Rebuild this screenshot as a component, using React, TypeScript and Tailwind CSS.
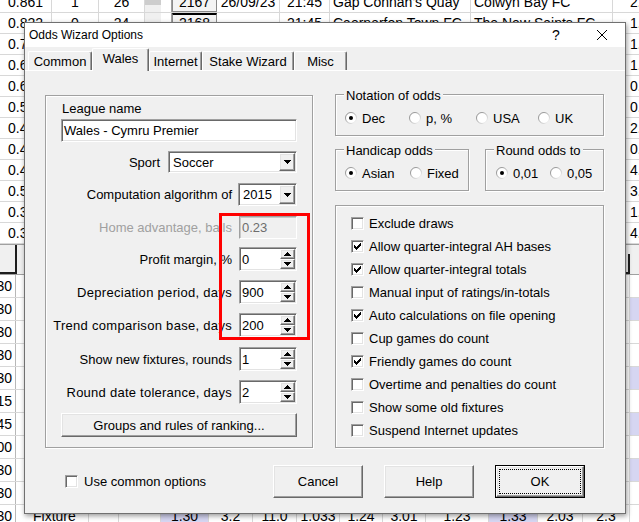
import type { ReactNode } from "react";

// classic 3D borders
const SUNKEN =
  "border border-t-[#a0a0a0] border-l-[#a0a0a0] border-r-white border-b-white shadow-[inset_1px_1px_0_#696969,inset_-1px_-1px_0_#e3e3e3]";
const RAISED =
  "border border-t-white border-l-white border-r-[#696969] border-b-[#696969] bg-[#f0f0f0] shadow-[inset_-1px_-1px_0_#a0a0a0,inset_1px_1px_0_#e3e3e3]";

type TopRowData = {
  rating: string;
  won?: string;
  games?: string;
  id?: string;
  date?: string;
  time?: string;
  home?: string;
  away?: string;
  odds: string;
};

const TOP_ROWS: TopRowData[] = [
  { rating: "0.861", won: "1", games: "26", id: "2167", date: "26/09/23", time: "21:45", home: "Gap Connah's Quay", away: "Colwyn Bay FC", odds: "2.05" },
  { rating: "0.822", won: "0", games: "24", id: "2168", date: "", time: "21:45", home: "Caernarfon Town FC", away: "The New Saints FC", odds: "1.62" },
  { rating: "0.745", odds: "1.48" },
  { rating: "0.634", odds: "1.91" },
  { rating: "0.612", odds: "0.77" },
  { rating: "0.538", odds: "0.64" },
  { rating: "0.471", odds: "2.10" },
  { rating: "0.455", odds: "0.85" },
  { rating: "0.418", odds: "4.20" },
  { rating: "0.502", odds: "3.35" },
  { rating: "0.367", odds: "1.18" },
  { rating: "0.341", odds: "4.02" },
];

const LOWER_TIMES = ["19:30", "19:30", "19:30", "19:30", "19:30", "20:15", "19:45", "20:00", "19:30", "19:30", "19:30"];
const LOWER_WIDTHS = ["w-[73px]", "w-[30px]", "w-[42px]", "w-[48px]", "w-[44px]", "w-[44px]", "w-[43px]", "w-[43px]", "w-[43px]", "w-[63px]", "w-[49px]", "w-[45px]", "w-[47px]"];
const LAST_ROW = ["Fixture", "", "", "1.30", "3.2", "11.0", "1.033", "1.24", "3.01", "1.23", "1.33", "2.03", "2.3"];
const LAVENDER_ROWS = [1, 4, 6, 8];

const OPTIONS: [string, boolean][] = [
  ["Exclude draws", false],
  ["Allow quarter-integral AH bases", true],
  ["Allow quarter-integral totals", true],
  ["Manual input of ratings/in-totals", false],
  ["Auto calculations on file opening", true],
  ["Cup games do count", false],
  ["Friendly games do count", true],
  ["Overtime and penalties do count", false],
  ["Show some old fixtures", false],
  ["Suspend Internet updates", false],
];

function SheetTopRow({ row, index }: { row: TopRowData; index: number }) {
  return (
    <div className="flex h-[21px] border-b border-[#d8d8d8]">
      <div className="flex w-[52px] shrink-0 items-center border-r border-[#d8d8d8] pl-[8px]">{row.rating}</div>
      <div className="flex w-[47px] shrink-0 items-center justify-center border-r border-[#d8d8d8]">{row.won}</div>
      <div className="flex w-[46px] shrink-0 items-center justify-center border-r border-[#d8d8d8]">{row.games}</div>
      <div className="w-[16px] shrink-0 bg-[#f0f0f0]">{index === 0 && <div className="h-[13px] bg-[#cdcdcd]" />}</div>
      <div className="w-[11px] shrink-0 border-r border-[#a0a0a0]" />
      <div
        className={`flex w-[45px] shrink-0 items-center justify-center ${
          row.id ? "border border-[#8a8a8a] bg-[#f4f4f4]" : "border-r border-[#d8d8d8]"
        } ${index === 1 ? "border-t-2 border-t-black" : ""}`}
      >
        {row.id}
      </div>
      <div className="flex w-[63px] shrink-0 items-center justify-center border-r border-[#d8d8d8]">{row.date}</div>
      <div className="flex w-[50px] shrink-0 items-center justify-center border-r border-[#d8d8d8]">{row.time}</div>
      <div className="flex w-[141px] shrink-0 items-center overflow-hidden whitespace-nowrap border-r border-[#d8d8d8] pl-[3px]">{row.home}</div>
      <div className="flex w-[142px] shrink-0 items-center overflow-hidden whitespace-nowrap border-r border-[#d8d8d8] pl-[3px]">{row.away}</div>
      <div className="flex w-[62px] shrink-0 items-center justify-center border-r border-[#d8d8d8]">{row.odds}</div>
      <div className="flex-1" />
    </div>
  );
}

function SheetLowerRow({ index }: { index: number }) {
  const cells = index === LOWER_TIMES.length - 1 ? LAST_ROW : [];
  return (
    <div className="flex h-[23px] border-b border-[#d8d8d8]">
      <div className="flex w-[16px] shrink-0 items-center justify-end overflow-hidden border-r border-[#b8b8b8] pr-[3px]">
        <span className="whitespace-nowrap">{LOWER_TIMES[index]}</span>
      </div>
      {LOWER_WIDTHS.map((w, c) => (
        <div
          key={c}
          className={`${w} flex shrink-0 items-center border-r border-[#d8d8d8] ${c === 0 ? "pl-[17px]" : "justify-center"} ${
            c === 3 || c === 10 ? "bg-[#d6d6f2]" : ""
          }`}
        >
          {cells[c]}
        </div>
      ))}
      <div className={`flex-1 ${LAVENDER_ROWS.includes(index) ? "bg-[#d6d6f2]" : ""}`} />
    </div>
  );
}

function Spreadsheet() {
  return (
    <div className="-mt-[8px]">
      {TOP_ROWS.map((row, i) => (
        <SheetTopRow key={i} row={row} index={i} />
      ))}
      <div className="flex h-[31px] border-y border-[#a0a0a0] bg-[#f0f0f0]">
        <div className="w-[17px] shrink-0 border-b-2 border-r-2 border-[#1e1e1e]" />
        <div className="w-[596px] shrink-0" />
        <div className="mt-[9px] w-[17px] shrink-0 border-b-2 border-r-2 border-[#1e1e1e]" />
        <div className="flex-1" />
      </div>
      {LOWER_TIMES.map((_, i) => (
        <SheetLowerRow key={i} index={i} />
      ))}
    </div>
  );
}

function Arrow({ dir }: { dir: "up" | "down" }) {
  return (
    <svg width="7" height="4" viewBox="0 0 7 4" className="block" shapeRendering="crispEdges">
      <path
        d={dir === "up" ? "M3 0h1v1h1v1h1v1h1v1H0V3h1V2h1V1h1z" : "M0 0h7v1h-1v1h-1v1h-1v1h-1V3H2V2H1V1H0z"}
        fill="#000"
      />
    </svg>
  );
}

function CheckBox({ checked }: { checked?: boolean }) {
  return (
    <span className={`block h-[13px] w-[13px] shrink-0 bg-white ${SUNKEN}`}>
      {checked && (
        <svg width="11" height="11" viewBox="0 0 11 11" className="block" shapeRendering="crispEdges">
          {[2, 3, 4, 3, 2, 1, 0].map((y, x) => (
            <rect key={x} x={x + 2} y={y + 2} width="1" height="3" fill="#000" />
          ))}
        </svg>
      )}
    </span>
  );
}

function Radio({ checked }: { checked?: boolean }) {
  return (
    <svg width="12" height="12" viewBox="0 0 12 12" className="block shrink-0">
      <defs>
        <linearGradient id="radio-edge" x1="0" y1="0" x2="1" y2="1">
          <stop offset="0" stopColor="#808080" />
          <stop offset="0.5" stopColor="#b4b4b4" />
          <stop offset="1" stopColor="#ffffff" />
        </linearGradient>
      </defs>
      <circle cx="6" cy="6" r="5.5" fill="#fff" stroke="url(#radio-edge)" />
      {checked && <circle cx="6" cy="6" r="2" fill="#000" />}
    </svg>
  );
}

function RadioItem({ label, checked, className = "" }: { label: string; checked?: boolean; className?: string }) {
  return (
    <div className={`flex items-center gap-[5px] ${className}`}>
      <Radio checked={checked} />
      <span>{label}</span>
    </div>
  );
}

function GroupBox({ title, className = "", children }: { title?: string; className?: string; children: ReactNode }) {
  return (
    <div className={`relative border border-[#a0a0a0] shadow-[1px_1px_0_#fff,inset_1px_1px_0_#fff] ${className}`}>
      {title && <span className="absolute -top-[7px] left-[8px] bg-[#f0f0f0] px-[2px]">{title}</span>}
      {children}
    </div>
  );
}

function SpinEdit({ value }: { value: string }) {
  return (
    <div className={`flex h-[24px] w-[58px] shrink-0 items-stretch bg-white tracking-normal ${SUNKEN}`}>
      <span className="flex flex-1 items-center pl-[2px]">{value}</span>
      <div className="my-[1px] mr-[1px] flex w-[15px] flex-col">
        <div className={`flex flex-1 items-center justify-center ${RAISED}`}>
          <Arrow dir="up" />
        </div>
        <div className={`flex flex-1 items-center justify-center ${RAISED}`}>
          <Arrow dir="down" />
        </div>
      </div>
    </div>
  );
}

function Combo({ value, className }: { value: string; className: string }) {
  return (
    <div className={`flex shrink-0 items-stretch bg-white ${SUNKEN} ${className}`}>
      <span className="flex flex-1 items-center pl-[4px]">{value}</span>
      <span className={`my-[1px] mr-[1px] flex w-[16px] items-center justify-center ${RAISED}`}>
        <Arrow dir="down" />
      </span>
    </div>
  );
}

function FormRow({
  label,
  disabled,
  className = "",
  children,
}: {
  label: string;
  disabled?: boolean;
  className?: string;
  children: ReactNode;
}) {
  return (
    <div className={`flex items-center justify-end ${className}`}>
      <span className={`shrink-0 whitespace-nowrap ${disabled ? "text-[#a0a0a0]" : ""}`}>{label}</span>
      {children}
    </div>
  );
}

function PushButton({ children, isDefault }: { children: ReactNode; isDefault?: boolean }) {
  if (isDefault) {
    return (
      <div className="h-[33px] w-[90px] border border-black">
        <button type="button" className={`relative h-full w-full ${RAISED}`}>
          <span className="absolute inset-[2px] border border-dotted border-black" />
          {children}
        </button>
      </div>
    );
  }
  return (
    <button type="button" className={`h-[33px] w-[90px] ${RAISED}`}>
      {children}
    </button>
  );
}

function Tab({ label, width, active }: { label: string; width: string; active?: boolean }) {
  return (
    <div
      className={`${width} flex items-center justify-center rounded-t-[2px] border border-b-0 border-l-white border-t-white border-r-[#696969] bg-[#f0f0f0] shadow-[inset_-1px_0_0_#a0a0a0] ${
        active ? "relative z-10 -mb-px h-[23px] pb-[3px]" : "h-[19px]"
      }`}
    >
      {label}
    </div>
  );
}

function LeagueGroup() {
  return (
    <GroupBox className="h-[353px] w-[268px] shrink-0 px-[15px] pt-[5px]">
      <div className="pl-[1px]">League name</div>
      <div className={`mt-[3px] flex h-[23px] items-center bg-white pl-[2px] ${SUNKEN}`}>Wales - Cymru Premier</div>
      <FormRow label="Sport" className="mt-[9px] gap-[8px]">
        <Combo value="Soccer" className="h-[22px] w-[129px]" />
      </FormRow>
      <FormRow label="Computation algorithm of" className="mt-[10px] gap-[6px]">
        <Combo value="2015" className="h-[23px] w-[59px]" />
      </FormRow>
      <FormRow label="Home advantage, balls" disabled className="mt-[10px] gap-[7px]">
        <div className="flex h-[23px] w-[58px] shrink-0 items-center border border-t-[#a0a0a0] border-l-[#a0a0a0] border-r-white border-b-white bg-[#f0f0f0] pl-[2px] text-[#6d6d6d] shadow-[inset_1px_1px_0_#c8c8c8]">
          0.23
        </div>
      </FormRow>
      <FormRow label="Profit margin, %" className="mt-[8px] gap-[7px]">
        <SpinEdit value="0" />
      </FormRow>
      <FormRow label="Depreciation period, days" className="mt-[9px] gap-[7px] tracking-[0.3px]">
        <SpinEdit value="900" />
      </FormRow>
      <FormRow label="Trend comparison base, days" className="mt-[9px] gap-[7px] tracking-[0.3px]">
        <SpinEdit value="200" />
      </FormRow>
      <FormRow label="Show new fixtures, rounds" className="mt-[10px] gap-[7px]">
        <SpinEdit value="1" />
      </FormRow>
      <FormRow label="Round date tolerance, days" className="mt-[9px] gap-[7px] tracking-[0.25px]">
        <SpinEdit value="2" />
      </FormRow>
      <button type="button" className={`mt-[9px] h-[24px] w-full ${RAISED}`}>
        Groups and rules of ranking...
      </button>
    </GroupBox>
  );
}

function OptionsDialog() {
  return (
    <div className="absolute left-[24px] top-[22px] flex h-[492px] w-[602px] flex-col border border-[#707070] bg-[#f0f0f0] text-[13px] leading-[15px] shadow-[1px_2px_5px_rgba(0,0,0,0.4)]">
      <div className="flex h-[24px] shrink-0 items-center bg-white">
        <span className="pl-[4px] text-[12px]">Odds Wizard Options</span>
        <span className="ml-auto flex h-full w-[46px] items-center justify-center text-[14px]">?</span>
        <span className="flex h-full w-[46px] items-center justify-center">
          <svg width="10" height="10" viewBox="0 0 10 10" className="block">
            <path d="M0 0L10 10M10 0L0 10" stroke="#000" strokeWidth="1" />
          </svg>
        </span>
      </div>

      <div className="flex h-[23px] shrink-0 items-end pl-[3px]">
        <Tab label="Common" width="w-[64px]" />
        <Tab label="Wales" width="w-[57px]" active />
        <Tab label="Internet" width="w-[53px]" />
        <Tab label="Stake Wizard" width="w-[92px]" />
        <Tab label="Misc" width="w-[53px]" />
      </div>

      <div className="flex border-t border-white pl-[20px] pt-[24px]">
        <LeagueGroup />
        <div className="-mt-px ml-[22px] flex w-[269px] flex-col">
          <GroupBox title="Notation of odds" className="h-[42px] pl-[9px] pt-[15px]">
            <div className="flex h-[16px] items-center">
              <RadioItem label="Dec" checked className="w-[64px]" />
              <RadioItem label="p, %" className="w-[67px]" />
              <RadioItem label="USA" className="w-[62px]" />
              <RadioItem label="UK" />
            </div>
          </GroupBox>
          <div className="mt-[13px] flex gap-[16px]">
            <GroupBox title="Handicap odds" className="h-[42px] w-[134px] pl-[9px] pt-[15px]">
              <div className="flex h-[16px] items-center">
                <RadioItem label="Asian" checked className="w-[65px]" />
                <RadioItem label="Fixed" />
              </div>
            </GroupBox>
            <GroupBox title="Round odds to" className="h-[42px] w-[119px] pl-[10px] pt-[15px]">
              <div className="flex h-[16px] items-center">
                <RadioItem label="0,01" checked className="w-[54px]" />
                <RadioItem label="0,05" />
              </div>
            </GroupBox>
          </div>
          <GroupBox className="mt-[14px] h-[243px] pl-[15px] pt-[6px]">
            {OPTIONS.map(([label, checked]) => (
              <div key={label} className="flex h-[23px] items-center gap-[5px]">
                <CheckBox checked={checked} />
                <span>{label}</span>
              </div>
            ))}
          </GroupBox>
        </div>
      </div>

      <div className="mt-[17px] flex h-[33px] shrink-0 items-center px-[40px]">
        <CheckBox />
        <span className="ml-[6px]">Use common options</span>
        <div className="ml-auto flex gap-[21px]">
          <PushButton>Cancel</PushButton>
          <PushButton>Help</PushButton>
          <PushButton isDefault>OK</PushButton>
        </div>
      </div>
    </div>
  );
}

export default function App() {
  return (
    <div className="relative h-[522px] w-[639px] overflow-hidden bg-white font-['Liberation_Sans',Arial,sans-serif] text-[14px] text-black">
      <Spreadsheet />
      <OptionsDialog />
      {/* red highlight around the spin fields */}
      <div className="absolute left-[219px] top-[213px] h-[127px] w-[91px] border-[3px] border-[#ff0000]" />
    </div>
  );
}
